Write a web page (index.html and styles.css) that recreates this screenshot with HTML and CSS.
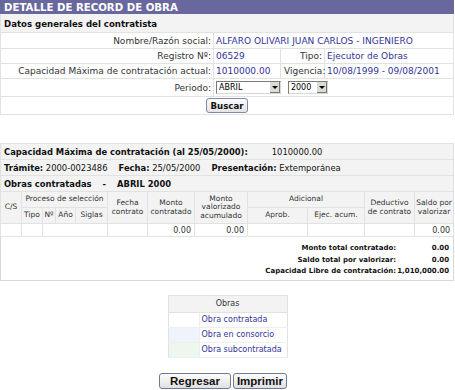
FILE: index.html
```html
<!DOCTYPE html>
<html lang="es">
<head>
    <meta charset="UTF-8">
    <title>Detalle de Record de Obra</title>
    <link rel="stylesheet" href="styles.css">
</head>
<body>
    <!-- Datos generales -->
    <table class="panel general">
        <colgroup>
            <col class="g1"><col class="g2"><col class="g3"><col class="g4">
        </colgroup>
        <tr><td colspan="4" class="title">DETALLE DE RECORD DE OBRA</td></tr>
        <tr><td colspan="4" class="subtitle">Datos generales del contratista</td></tr>
        <tr>
            <td class="label">Nombre/Razón social:</td>
            <td colspan="3" class="value">ALFARO OLIVARI JUAN CARLOS - INGENIERO</td>
        </tr>
        <tr class="thin">
            <td class="label">Registro Nº:</td>
            <td class="value">06529</td>
            <td class="label">Tipo:</td>
            <td class="value">Ejecutor de Obras</td>
        </tr>
        <tr class="thin">
            <td class="label">Capacidad Máxima de contratación actual:</td>
            <td class="value">1010000.00</td>
            <td class="label">Vigencia:</td>
            <td class="value">10/08/1999 - 09/08/2001</td>
        </tr>
        <tr class="tall">
            <td class="label">Periodo:</td>
            <td colspan="3" class="value">
                <span class="combo combo-month">
                    <select><option>ABRIL</option></select>
                    <span class="combo-arrow"></span>
                </span>
                <span class="combo combo-year">
                    <select><option>2000</option></select>
                    <span class="combo-arrow"></span>
                </span>
            </td>
        </tr>
        <tr class="tall">
            <td colspan="4" class="center"><button type="button" class="btn-small">Buscar</button></td>
        </tr>
    </table>

    <!-- Obras contratadas -->
    <table class="panel record">
        <colgroup>
            <col style="width:21px"><col style="width:21px"><col style="width:13px"><col style="width:20px">
            <col style="width:32px"><col style="width:40px"><col style="width:47px"><col style="width:53px">
            <col style="width:60px"><col style="width:57px"><col style="width:50px"><col style="width:39px">
        </colgroup>
        <tr><td colspan="12" class="info"><b>Capacidad Máxima de contratación (al 25/05/2000):</b><span class="gap-l">1010000.00</span></td></tr>
        <tr><td colspan="12" class="info"><b>Trámite:</b> 2000-0023486<b class="gap-m">Fecha:</b> 25/05/2000<b class="gap-m">Presentación:</b> Extemporánea</td></tr>
        <tr><td colspan="12" class="info"><b>Obras contratadas<span class="gap-s">-</span><span class="gap-s">ABRIL 2000</span></b></td></tr>
        <tr class="head">
            <th rowspan="2">C/S</th>
            <th colspan="4">Proceso de selección</th>
            <th rowspan="2">Fecha<br>contrato</th>
            <th rowspan="2">Monto<br>contratado</th>
            <th rowspan="2">Monto<br>valorizado<br>acumulado</th>
            <th colspan="2">Adicional</th>
            <th rowspan="2">Deductivo<br>de contrato</th>
            <th rowspan="2">Saldo por<br>valorizar</th>
        </tr>
        <tr class="head">
            <th>Tipo</th>
            <th>Nº</th>
            <th>Año</th>
            <th>Siglas</th>
            <th>Aprob.</th>
            <th>Ejec. acum.</th>
        </tr>
        <tr class="data">
            <td></td>
            <td></td>
            <td colspan="3"></td>
            <td></td>
            <td class="num">0.00</td>
            <td class="num">0.00</td>
            <td></td>
            <td></td>
            <td></td>
            <td class="num">0.00</td>
        </tr>
        <tr>
            <td colspan="12" class="totals">
                <div class="total-row"><span>Monto total contratado:</span><span class="amt">0.00</span></div>
                <div class="total-row"><span>Saldo total por valorizar:</span><span class="amt">0.00</span></div>
                <div class="total-row"><span>Capacidad Libre de contratación:</span><span class="amt">1,010,000.00</span></div>
            </td>
        </tr>
    </table>

    <!-- Leyenda -->
    <table class="legend">
        <tr><th colspan="2">Obras</th></tr>
        <tr><td class="sw"></td><td>Obra contratada</td></tr>
        <tr><td class="sw sw-blue"></td><td>Obra en consorcio</td></tr>
        <tr><td class="sw sw-green"></td><td>Obra subcontratada</td></tr>
    </table>

    <div class="actions">
        <button type="button" class="btn btn-wide">Regresar</button>
        <button type="button" class="btn">Imprimir</button>
    </div>
</body>
</html>
```

FILE: styles.css
```css
body {
    margin: 0;
    font-family: "DejaVu Sans", Verdana, sans-serif;
    font-size: 9px;
    color: #333;
    background: #fff;
}
.panel {
    width: 453px;
    border-collapse: collapse;
    border: 1px solid #d8d8d8;
    table-layout: fixed;
}
.panel td, .panel th {
    border: 1px solid #e2e2e2;
    padding: 0 3px;
    height: 15px;
}
.g1 { width: 213px; }
.g2 { width: 67px; }
.g3 { width: 44px; }
.g4 { width: 129px; }
.panel .title {
    background-color: #68689e;
    color: #fff;
    font-weight: bold;
    font-size: 10.2px;
    height: 12px;
    padding: 0 3px;
    border-color: #68689e;
}
.panel .subtitle {
    background-color: #f3f3f3;
    font-weight: bold;
    font-size: 8.6px;
    color: #111;
    height: 17px;
    padding-top: 1px;
}
.thin td {
    height: 14px;
}
.panel .tall td {
    height: 17px;
}
.label {
    text-align: right;
    white-space: nowrap;
    padding-right: 2px !important;
}
.value {
    color: #333399;
    white-space: nowrap;
    padding-left: 2px !important;
}
.center {
    text-align: center;
}
/* combo box: select with a classic arrow button over it */
.combo {
    position: relative;
    display: inline-block;
    vertical-align: middle;
}
.combo select {
    appearance: none;
    -webkit-appearance: none;
    font-family: "DejaVu Sans", Verdana, sans-serif;
    font-size: 8px;
    height: 13px;
    padding: 0 0 0 2px;
    border: 1px solid #7a7a7a;
    border-right-color: #d8d8d8;
    border-bottom-color: #d8d8d8;
    background: #fff;
    color: #000;
    display: block;
}
.combo-month select {
    width: 65px;
}
.combo-year {
    margin-left: 4px;
}
.combo-year select {
    width: 40px;
}
.combo-arrow {
    position: absolute;
    right: 1px;
    top: 1px;
    width: 10px;
    height: 11px;
    background: #dcdad5;
    border-right: 1px solid #777;
    border-bottom: 1px solid #777;
    box-sizing: border-box;
}
.combo-arrow::after {
    content: "";
    position: absolute;
    left: 2px;
    top: 4px;
    border-left: 3px solid transparent;
    border-right: 3px solid transparent;
    border-top: 3px solid #000;
}
.btn-small {
    font-family: "DejaVu Sans", Verdana, sans-serif;
    font-size: 8.6px;
    font-weight: bold;
    padding: 0 4px;
    height: 15px;
    border: 1px solid #7a8aa8;
    border-radius: 3px;
    background: linear-gradient(#fdfdfd, #e4e4e4);
    color: #111;
    vertical-align: middle;
}
.record {
    margin-top: 28px;
}
.panel .info {
    background-color: #f3f3f3;
    color: #111;
    font-size: 8.4px;
    height: 15px;
    white-space: nowrap;
}
.gap-l {
    margin-left: 24px;
}
.gap-m {
    margin-left: 11px;
}
.gap-s {
    margin-left: 11px;
}
.head th {
    background-color: #f3f3f3;
    font-weight: normal;
    font-size: 7.5px;
    line-height: 8.3px;
    padding: 0;
    color: #333;
    white-space: nowrap;
}
.panel .head th {
    height: 15px;
}
.panel .data td {
    height: 12px;
    text-align: right;
    font-size: 8px;
    padding: 0 3px;
}
.panel .totals {
    border: none;
    padding: 6px 4px 2px 0;
    font-size: 7px;
    font-weight: bold;
    color: #111;
}
.total-row {
    display: flex;
    justify-content: flex-end;
    height: 11.5px;
    line-height: 11.5px;
}
.amt {
    width: 53px;
    text-align: right;
}
.legend {
    margin: 14px auto 0;
    width: 120px;
    border-collapse: collapse;
    border: 1px solid #e2e2e2;
    font-size: 8px;
}
.legend th {
    background-color: #f3f3f3;
    font-weight: normal;
    height: 14px;
    border: 1px solid #e2e2e2;
}
.legend td {
    color: #333399;
    height: 14px;
    padding: 0 2px;
    white-space: nowrap;
    border-bottom: 1px solid #eee;
}
.legend .sw {
    width: 26px;
    background: #fff;
    border-right: 1px solid #eee;
}
.legend .sw-blue {
    background: #eef3fc;
}
.legend .sw-green {
    background: #eef7ee;
}
.actions {
    display: flex;
    justify-content: center;
    gap: 2px;
    padding-right: 9px;
    margin-top: 15px;
}
.btn {
    font-family: "Liberation Sans", Arial, sans-serif;
    font-size: 11.5px;
    font-weight: bold;
    height: 16px;
    padding: 0 3px;
    border: 1px solid #6d7b97;
    border-radius: 3px;
    background: linear-gradient(#fdfdfd, #e0e0e0);
    color: #111;
    line-height: 12px;
}
.btn-wide {
    padding: 0 10px;
}
```
